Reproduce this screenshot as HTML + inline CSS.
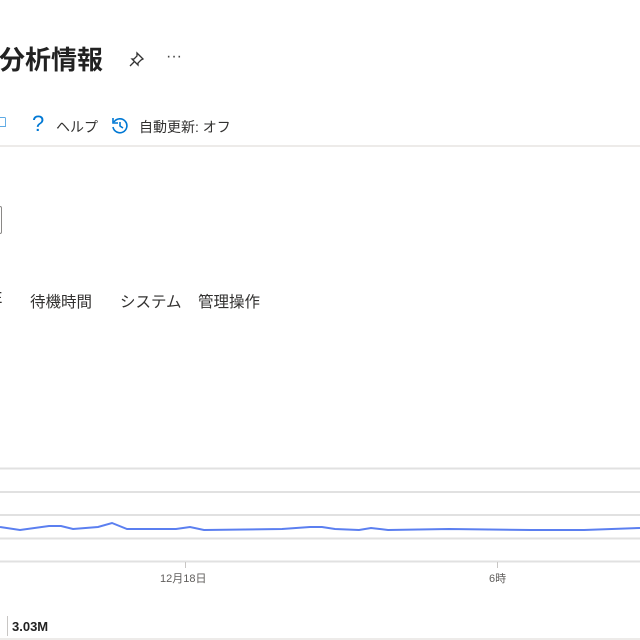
<!DOCTYPE html>
<html><head><meta charset="utf-8"><style>
body{margin:0;width:640px;height:640px;overflow:hidden;background:#fff;font-family:"Liberation Sans","Noto Sans CJK JP",sans-serif;color:#323130;position:relative}
.a{position:absolute;white-space:nowrap}
</style></head><body>
<div class="a" style="left:-1px;top:40px;font-size:26px;font-weight:600;color:#222">分析情報</div>
<svg class="a" style="left:128px;top:50px" width="18" height="18" viewBox="0 0 18 18"><path d="M9 3l6 6-2 1-3 3 0 2-6-6 2 0 3-3z M6 12l-4 4" fill="none" stroke="#333" stroke-width="1.3"/></svg>
<div class="a" style="left:166px;top:48px;font-size:16px;color:#444">···</div>
<div class="a" style="left:-4px;top:114px;font-size:16px;color:#0078d4">□</div>
<div class="a" style="left:32px;top:111px;font-size:22px;color:#0078d4">?</div>
<div class="a" style="left:56px;top:117px;font-size:14px">ヘルプ</div>
<svg class="a" style="left:110px;top:116px" width="20" height="20" viewBox="0 0 20 20"><path d="M4 6A7 7 0 1 1 3 11" fill="none" stroke="#0078d4" stroke-width="1.6"/><path d="M3 2v5h5" fill="none" stroke="#0078d4" stroke-width="1.6"/><path d="M10 6v4l3 2" fill="none" stroke="#0078d4" stroke-width="1.6"/></svg>
<div class="a" style="left:139px;top:117px;font-size:14px">自動更新: オフ</div>
<div class="a" style="left:0;top:145px;width:640px;height:2px;background:#edebe9"></div>
<div class="a" style="left:-6px;top:206px;width:6px;height:26px;border:1px solid #8a8886;border-radius:2px"></div>
<div class="a" style="left:-8px;top:290px;font-size:15.5px">E</div>
<div class="a" style="left:30px;top:290px;font-size:15.5px">待機時間</div>
<div class="a" style="left:120px;top:290px;font-size:15.5px">システム</div>
<div class="a" style="left:198px;top:290px;font-size:15.5px">管理操作</div>
<svg class="a" style="left:0;top:460px" width="640" height="130">
<g stroke="#e1e1e1" stroke-width="2"><line x1="0" y1="8.5" x2="640" y2="8.5"/><line x1="0" y1="32" x2="640" y2="32"/><line x1="0" y1="55" x2="640" y2="55"/><line x1="0" y1="78.5" x2="640" y2="78.5"/><line x1="0" y1="101.5" x2="640" y2="101.5"/></g>
<g stroke="#c8c6c4"><line x1="185.5" y1="102" x2="185.5" y2="108"/><line x1="497.5" y1="102" x2="497.5" y2="108"/></g>
<polyline fill="none" stroke="#5b7ff0" stroke-width="2" points="0,67 20,70 49,66 61,66 73,69 98,67 112,63 127,69 176,69 190,67 204,70 282,69 310,67 322,67 335,69 359,70 371,68 388,70 449,69 531,70 584,70 640,68"/>
</svg>
<div class="a" style="left:160px;top:570px;font-size:11px;color:#605e5c">12月18日</div>
<div class="a" style="left:489px;top:570px;font-size:11px;color:#605e5c">6時</div>
<div class="a" style="left:7px;top:616px;width:1px;height:20px;background:#c8c6c4"></div>
<div class="a" style="left:12px;top:619px;font-size:13px;font-weight:600;color:#222">3.03M</div>
<div class="a" style="left:0;top:638px;width:640px;height:2px;background:#edebe9"></div>
</body></html>
